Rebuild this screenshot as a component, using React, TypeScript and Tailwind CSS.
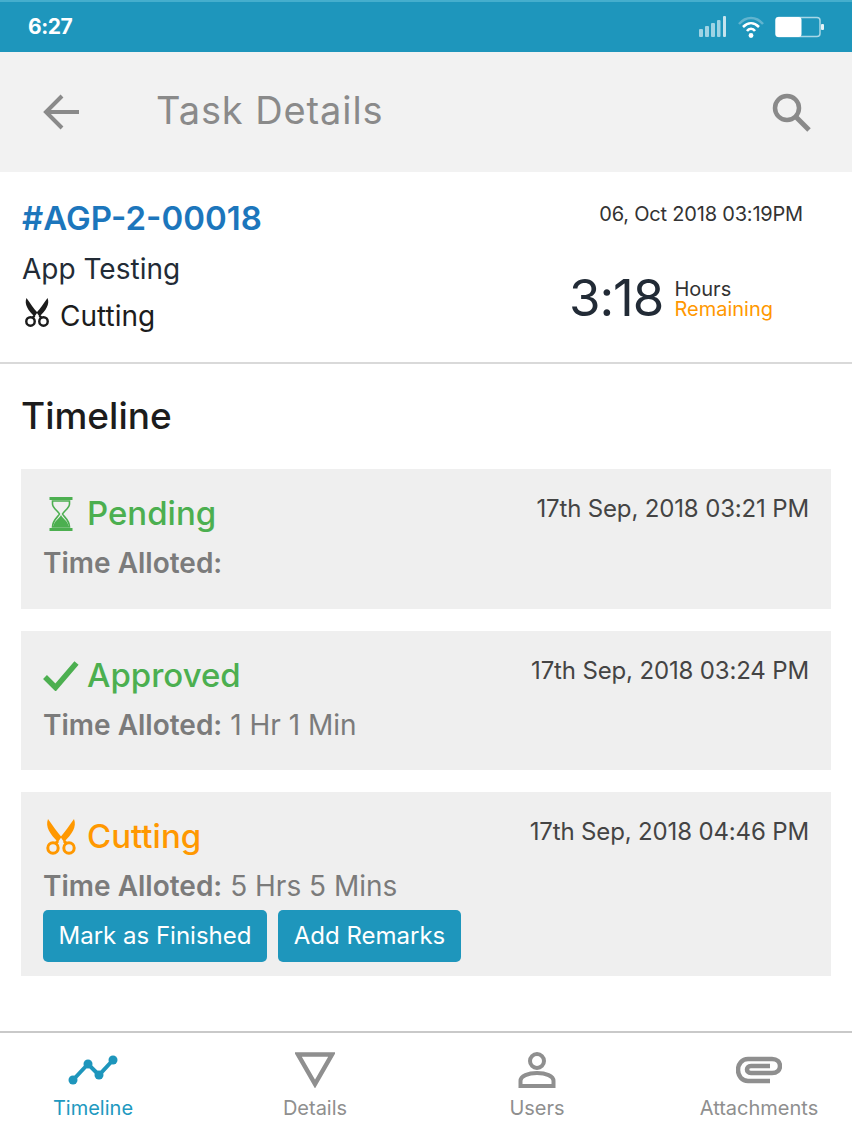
import type { ReactNode } from 'react'

const font = "font-['Inter','Lato',sans-serif]"

const Scissors = ({ color, className }: { color: string; className: string }) => (
  <svg viewBox="0 0 32 36" className={className}>
    <path d="M3 0 C0 8 5 15 13 23 L16.500 18 C12 13 8 7 3 0 Z" fill={color} />
    <path d="M29 0 C32 8 27 15 19 23 L15.500 18 C20 13 24 7 29 0 Z" fill={color} />
    <path d="M13 22 L10 25 M19 22 L22 25" stroke={color} strokeWidth="3" fill="none" />
    <circle cx="8" cy="29" r="5.2" stroke={color} strokeWidth="3" fill="none" />
    <circle cx="24" cy="29" r="5.2" stroke={color} strokeWidth="3" fill="none" />
  </svg>
)

const Hourglass = () => (
  <svg viewBox="0 0 24 36" className="w-[24px] h-[36px]">
    <rect x="0.5" y="1" width="23" height="3" fill="#4caf50" />
    <rect x="0.5" y="32" width="23" height="3" fill="#4caf50" />
    <path d="M3.5 5 H20.5 V8 C20.5 12 15 15 13.5 18 C15 21 20.5 24 20.5 31 H3.5 C3.5 24 9 21 10.5 18 C9 15 3.5 12 3.5 8 Z" fill="none" stroke="#4caf50" strokeWidth="1.6" />
    <path d="M12 19 C14 23 19 25 20 31 H4 C5 25 10 23 12 19 Z" fill="#4caf50" />
  </svg>
)

const Check = () => (
  <svg viewBox="0 0 36 30" className="w-[36px] h-[30px]">
    <path d="M2 16 L12.500 26.500 L33.500 2" fill="none" stroke="#4caf50" strokeWidth="5.5" />
  </svg>
)

const StatusIcons = () => (
  <div className="flex items-center gap-[10px]">
    <svg viewBox="0 0 30 24" className="w-[30px] h-[24px]">
      <rect x="1" y="14" width="4" height="8" rx="1" fill="#9fd3e4" />
      <rect x="7" y="11" width="4" height="11" rx="1" fill="#9fd3e4" />
      <rect x="13" y="8" width="4" height="14" rx="1" fill="#9fd3e4" />
      <rect x="19" y="5" width="3.5" height="17" rx="1" fill="#9fd3e4" />
      <rect x="25" y="1" width="3" height="21" rx="1" fill="#c5e4ee" />
    </svg>
    <svg viewBox="0 0 26 24" className="w-[26px] h-[24px]">
      <path d="M1 9 C8 1 18 1 25 9" fill="none" stroke="#61b4cf" strokeWidth="2.5" />
      <path d="M5 12 C10 7 16 7 21 12" fill="none" stroke="#ffffff" strokeWidth="2.5" />
      <path d="M9 16 C11 13 15 13 17 16" fill="none" stroke="#ffffff" strokeWidth="2.5" />
      <circle cx="13" cy="20.5" r="2.4" fill="#ffffff" />
    </svg>
    <svg viewBox="0 0 50 22" className="w-[50px] h-[22px] ml-[1px]">
      <rect x="1" y="1.5" width="44" height="19" rx="3" fill="none" stroke="#a8d7e6" strokeWidth="1.5" />
      <rect x="0.5" y="1" width="26" height="20" rx="3" fill="#ffffff" />
      <rect x="46" y="8" width="3" height="6" rx="1" fill="#e3f2f7" />
    </svg>
  </div>
)

const Card = ({
  icon,
  title,
  titleColor,
  date,
  allotted,
  children,
}: {
  icon: ReactNode
  title: string
  titleColor: string
  date: string
  allotted?: string
  children?: ReactNode
}) => (
  <div className="bg-[#efefef] px-[22px] pt-[20px] pb-[14px] min-h-[139.5px]">
    <div className="flex justify-between">
      <div className={`flex items-center gap-[8px] h-[50px] text-[33px] font-medium ${titleColor}`}>
        <span className="flex w-[36px] justify-center">{icon}</span>
        {title}
      </div>
      <div className="pt-px text-[24px] leading-[38px] tracking-[-0.15px] text-[#444444]">{date}</div>
    </div>
    <div className="mt-[3px] text-[28px] leading-[42px] text-[#7b7b7b]">
      <span className="font-semibold">Time Alloted:</span>
      {allotted ? ` ${allotted}` : ''}
    </div>
    {children}
  </div>
)

const Tab = ({ label, active, icon }: { label: string; active?: boolean; icon: ReactNode }) => (
  <div className={`flex flex-col items-center ${active ? 'text-[#2199c0]' : 'text-[#8f8f8f]'}`}>
    <div className="h-[46px] flex items-center">{icon}</div>
    <div className="mt-[2px] text-[20px] leading-[26px]">{label}</div>
  </div>
)

export default function App() {
  return (
    <div className={`${font} w-[852px] h-[1136px] bg-white flex flex-col overflow-hidden`}>
      <div className="h-[52px] bg-[#1e96bc] border-t-2 border-[#45aecd] flex items-center justify-between pl-[28px] pr-[27px]">
        <span className="text-white text-[21px] font-bold tracking-[-0.5px]">6:27</span>
        <StatusIcons />
      </div>

      <div className="h-[120px] bg-[#f2f2f2] flex items-center pl-[43px] pr-[41px]">
        <svg viewBox="0 0 38 36" className="w-[38px] h-[36px]">
          <path d="M36 18 H4 M19 2 L3 18 L19 34" fill="none" stroke="#8a8a8a" strokeWidth="4" />
        </svg>
        <div className="ml-[75px] flex-1 text-[38px] tracking-[0.9px] -mt-[4px] text-[#8a8a8a]">Task Details</div>
        <svg viewBox="0 0 40 40" className="w-[40px] h-[40px]">
          <circle cx="16" cy="16" r="12" fill="none" stroke="#8a8a8a" strokeWidth="4.5" />
          <path d="M25 25 L38 38" stroke="#8a8a8a" strokeWidth="5" />
        </svg>
      </div>

      <div className="h-[192px] border-b-2 border-[#d9d9d9] pl-[22px] pr-[49px] pt-[24px] flex justify-between">
        <div>
          <div className="text-[33px] leading-[44px] font-semibold text-[#1c76bc]">#AGP-2-00018</div>
          <div className="mt-[8px] text-[28px] leading-[42px] text-[#222b36]">App Testing</div>
          <div className="mt-[5px] flex items-center gap-[10px] text-[28px] leading-[42px] text-[#1c1c1c]">
            <Scissors color="#1c1c1c" className="ml-[2px] w-[26px] h-[31px] -mt-[8px]" />
            Cutting
          </div>
        </div>
        <div className="flex flex-col items-end">
          <div className="pt-px text-[20px] leading-[34px] tracking-[-0.2px] text-[#333333]">06, Oct 2018 03:19PM</div>
          <div className="mt-[37px] mr-[30px] flex items-center gap-[11px]">
            <span className="text-[51px] leading-[60px] tracking-[-1px] text-[#222b36]">3:18</span>
            <div className="text-[20px] leading-[20px] mt-[1px]">
              <div className="text-[#333333]">Hours</div>
              <div className="text-[#ff9800]">Remaining</div>
            </div>
          </div>
        </div>
      </div>

      <div className="flex-1 px-[21px]">
        <div className="pt-[27px] text-[37px] leading-[50px] font-medium text-[#1c1c1c]">Timeline</div>
        <div className="mt-[28px] flex flex-col gap-[22px]">
          <Card icon={<Hourglass />} title="Pending" titleColor="text-[#4caf50]" date="17th Sep, 2018 03:21 PM" />
          <Card icon={<Check />} title="Approved" titleColor="text-[#4caf50]" date="17th Sep, 2018 03:24 PM" allotted="1 Hr 1 Min" />
          <Card
            icon={<Scissors color="#ff9800" className="w-[32px] h-[36px]" />}
            title="Cutting"
            titleColor="text-[#ff9800]"
            date="17th Sep, 2018 04:46 PM"
            allotted="5 Hrs 5 Mins"
          >
            <div className="mt-[3px] flex gap-[11px]">
              <button className="h-[52px] w-[224px] rounded-[5px] bg-[#1e96bc] text-white text-[24px]">Mark as Finished</button>
              <button className="h-[52px] w-[183px] rounded-[5px] bg-[#1e96bc] text-white text-[24px]">Add Remarks</button>
            </div>
          </Card>
        </div>
      </div>

      <div className="h-[103px] mb-[2px] border-t-2 border-[#c9c9c9] -ml-[18px] w-[888px] grid grid-cols-4 pt-[14px]">
        <Tab
          label="Timeline"
          active
          icon={
            <svg viewBox="0 0 50 30" className="w-[50px] h-[30px]">
              <path d="M5 25 L20 9 L31 20 L45 5" fill="none" stroke="#1e96bc" strokeWidth="4" />
              <circle cx="5" cy="25" r="4.5" fill="#1e96bc" />
              <circle cx="20" cy="9" r="4.5" fill="#1e96bc" />
              <circle cx="31" cy="20" r="4.5" fill="#1e96bc" />
              <circle cx="45" cy="5" r="4.5" fill="#1e96bc" />
            </svg>
          }
        />
        <Tab
          label="Details"
          icon={
            <svg viewBox="0 0 40 36" className="w-[40px] h-[36px]">
              <path d="M3 2.5 H37 L20 32 Z" fill="none" stroke="#8f8f8f" strokeWidth="4.5" />
            </svg>
          }
        />
        <Tab
          label="Users"
          icon={
            <svg viewBox="0 0 38 36" className="w-[38px] h-[36px]">
              <circle cx="19" cy="9" r="7" fill="none" stroke="#8f8f8f" strokeWidth="4" />
              <path d="M2.5 34 V29 C2.5 24 10 21 19 21 C28 21 35.5 24 35.5 29 V34 Z" fill="none" stroke="#8f8f8f" strokeWidth="4" />
            </svg>
          }
        />
        <Tab
          label="Attachments"
          icon={
            <svg viewBox="0 0 46 28" className="w-[46px] h-[28px]">
              <path d="M34 25 H12 C6 25 2 20 2 14 C2 8 6 3 12 3 H36 C41 3 44 6 44 10 C44 14 41 17 36 17 H15 C12 17 11 15 11 13.500 C11 12 12 10 15 10 H34" fill="none" stroke="#8f8f8f" strokeWidth="4.5" />
            </svg>
          }
        />
      </div>
    </div>
  )
}
